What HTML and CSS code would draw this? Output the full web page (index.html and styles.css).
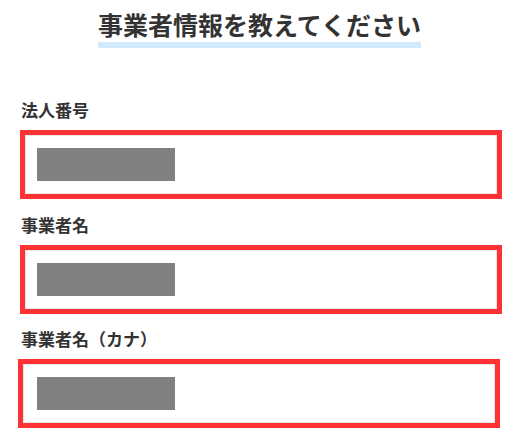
FILE: index.html
```html
<!DOCTYPE html>
<html lang="ja">
<head>
<meta charset="utf-8">
<title>事業者情報</title>
<link rel="stylesheet" href="styles.css">
</head>
<body>
<main class="page">
  <header class="heading">
    <h1 class="title">事業者情報を教えてください</h1>
  </header>
  <section class="form">
    <div class="field">
      <div class="label">法人番号</div>
      <div class="box">
        <div class="input"><span class="mask"></span></div>
      </div>
    </div>
    <div class="field">
      <div class="label">事業者名</div>
      <div class="box">
        <div class="input"><span class="mask"></span></div>
      </div>
    </div>
    <div class="field">
      <div class="label">事業者名（カナ）</div>
      <div class="box box-shift">
        <div class="input"><span class="mask"></span></div>
      </div>
    </div>
  </section>
</main>
</body>
</html>
```

FILE: styles.css
```css
* { box-sizing: border-box; }
html, body { margin: 0; padding: 0; background: #ffffff; }
body {
  font-family: "Noto Sans CJK JP", "Noto Sans", sans-serif;
  color: #333333;
  width: 519px;
  height: 434px;
  overflow: hidden;
}
.page { padding: 9px 0 0 0; }
.heading { display: flex; justify-content: center; }
.title {
  margin: 0;
  font-size: 25px;
  line-height: 30px;
  font-weight: 700;
  padding-bottom: 3px;
  border-bottom: 6px solid #d3eafc;
}
.form {
  display: flex;
  flex-direction: column;
  gap: 13.5px;
  padding: 50px 17px 0 20px;
}
.field { display: flex; flex-direction: column; gap: 8px; }
.label {
  padding-left: 1px;
  font-size: 17px;
  line-height: 24px;
  font-weight: 700;
}
.box {
  width: 482px;
  height: 69px;
  border: 5px solid #fe3134;
}
.box-shift { margin-left: -2.5px; }
.input {
  height: 100%;
  border: 1px solid #e6e6e6;
  padding: 12px 0 0 11px;
}
.box-shift .input { padding-left: 13.5px; }
.mask {
  display: block;
  width: 138px;
  height: 33px;
  background: #808080;
}
```
